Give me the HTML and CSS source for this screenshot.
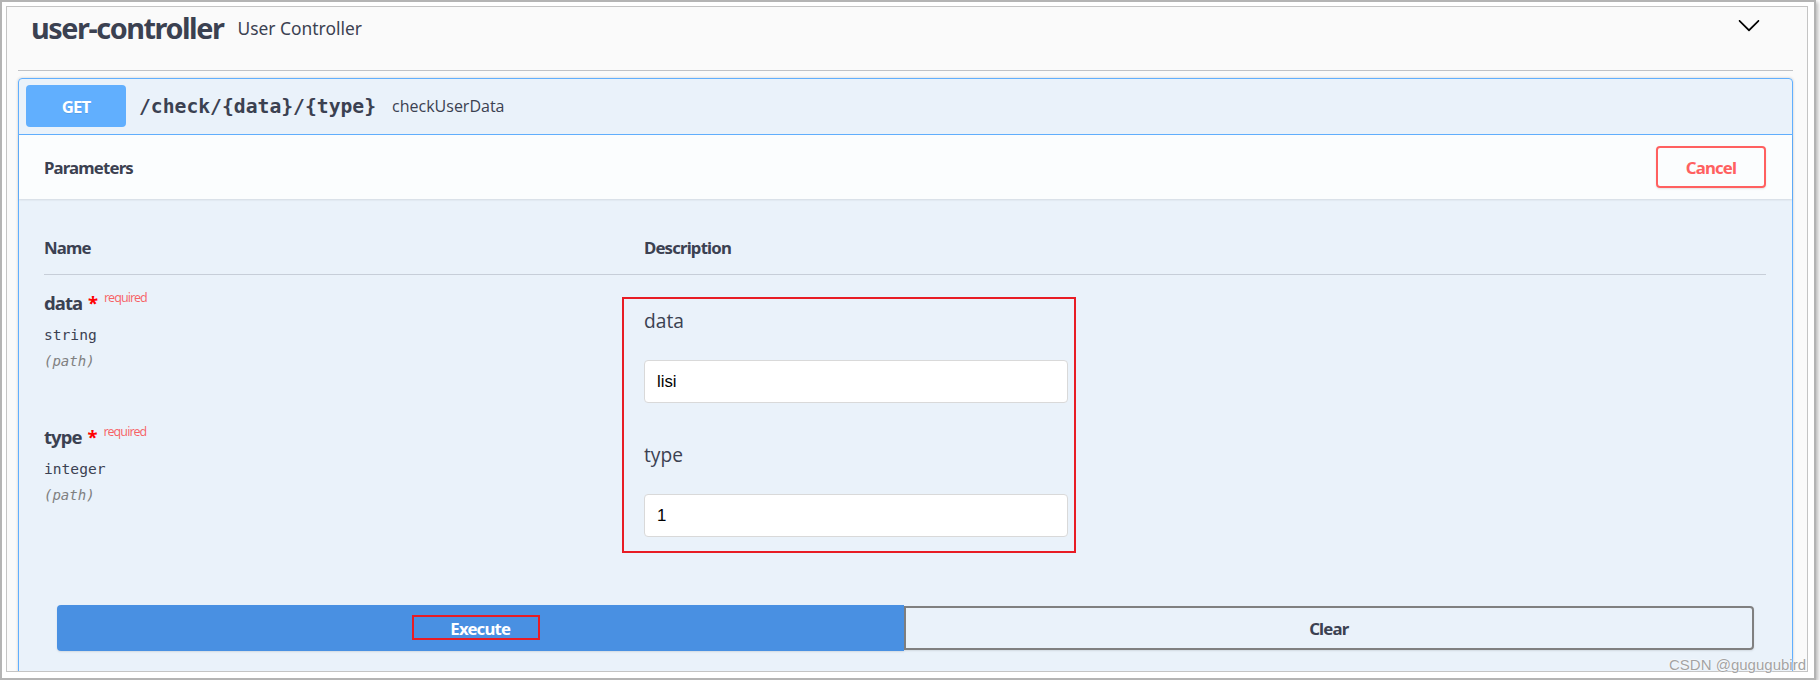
FILE: index.html
```html
<!DOCTYPE html>
<html lang="en">
<head>
<meta charset="utf-8">
<title>Swagger - user-controller</title>
<link rel="stylesheet" href="styles.css">
</head>
<body>
<div class="shot">
  <div class="frame">
    <div class="tag-section">
      <h3 class="tag">
        <span class="tag-name">user-controller</span>
        <small class="tag-desc">User Controller</small>
        <svg class="arrow" viewBox="0 0 20 20" width="24" height="24" aria-hidden="true"><path d="M17.418 6.109c.272-.268.709-.268.979 0s.271.701 0 .969l-7.908 7.83c-.27.268-.707.268-.979 0l-7.908-7.830c-.27-.268-.27-.701 0-.969.271-.268.709-.268.979 0L10 13.25l7.418-7.141z"/></svg>
      </h3>
      <div class="opblock">
        <div class="summary">
          <span class="method">GET</span>
          <span class="path">/check/{data}/{type}</span>
          <span class="summary-desc">checkUserData</span>
        </div>
        <div class="section-header">
          <h4 class="section-title">Parameters</h4>
          <button class="btn cancel">Cancel</button>
        </div>
        <div class="table">
          <div class="thead">
            <div class="th">Name</div>
            <div class="th">Description</div>
          </div>
          <div class="tbody">
            <div class="row">
              <div class="col-name">
                <div class="pname">data<span class="star">&nbsp;*</span><span class="req">required</span></div>
                <div class="ptype">string</div>
                <div class="pin">(path)</div>
              </div>
              <div class="col-desc">
                <p class="pdesc">data</p>
                <input class="pinput" type="text" value="lisi">
              </div>
            </div>
            <div class="row">
              <div class="col-name">
                <div class="pname">type<span class="star">&nbsp;*</span><span class="req">required</span></div>
                <div class="ptype">integer</div>
                <div class="pin">(path)</div>
              </div>
              <div class="col-desc">
                <p class="pdesc">type</p>
                <input class="pinput" type="text" value="1">
              </div>
            </div>
            <div class="mark mark-desc"></div>
          </div>
        </div>
        <div class="execute-wrapper">
          <button class="btn execute">Execute<span class="mark mark-exec"></span></button>
          <button class="btn clear">Clear</button>
        </div>
      </div>
    </div>
  </div>
  <div class="watermark">CSDN @gugugubird</div>
</div>
</body>
</html>
```

FILE: styles.css
```css
* { box-sizing: border-box; }

body {
  margin: 0;
  background: #ffffff;
  font-family: "Noto Sans", "Open Sans", sans-serif;
  color: #3b4151;
}

.shot {
  position: relative;
  width: 1816px;
  height: 680px;
  border: 2px solid #b4b4b4;
  padding: 4px 6px 6px 4px;
  background: #ffffff;
  box-shadow: 2px 2px 4px rgba(0, 0, 0, 0.28);
}

.frame {
  width: 100%;
  height: 100%;
  border: 1px solid #c4c4c4;
  background: #fafafa;
  overflow: hidden;
}

.tag-section {
  padding: 0 14px 0 11px;
}

/* Titillium-like headings: Noto Sans tightened */
.tag-name,
.method,
.section-title,
.th,
.pname,
.btn {
  font-family: "Noto Sans", sans-serif;
  font-weight: 700;
  letter-spacing: -0.05em;
}

/* ---------- tag header ---------- */
.tag {
  display: flex;
  align-items: flex-start;
  height: 64px;
  margin: 0;
  padding: 3px 0 0 0;
  border-bottom: 1px solid rgba(59, 65, 81, 0.3);
}

.tag-name {
  margin-left: 13px;
  font-size: 28.8px;
  line-height: 36px;
  color: #3b4151;
}

.tag-desc {
  margin: 8px 0 0 14px;
  font-family: "Noto Sans", sans-serif;
  font-weight: 400;
  font-size: 17.4px;
  line-height: 20px;
  color: #3b4151;
}

.arrow {
  display: block;
  margin: 3px 32px 0 auto;
  fill: #000000;
}

/* ---------- operation block ---------- */
.opblock {
  margin-top: 7px;
  border: 1px solid #61affe;
  border-radius: 4px;
  background: rgba(97, 175, 254, 0.1);
  box-shadow: 0 0 3px rgba(0, 0, 0, 0.19);
}

.summary {
  display: flex;
  align-items: center;
  padding: 6px 7px 7px;
  border-bottom: 1px solid #61affe;
}

.method {
  display: flex;
  align-items: center;
  justify-content: center;
  width: 100px;
  height: 42px;
  border-radius: 4px;
  background: #61affe;
  color: #ffffff;
  font-size: 16.8px;
  text-shadow: 0 1px 0 rgba(0, 0, 0, 0.1);
}

.path {
  margin-left: 13px;
  font-family: "DejaVu Sans Mono", "Liberation Mono", monospace;
  font-weight: 700;
  font-size: 19.7px;
  color: #3b4151;
}

.summary-desc {
  margin-left: 16px;
  font-family: "Open Sans", "Noto Sans", sans-serif;
  font-size: 16px;
  color: #3b4151;
}

.section-header {
  display: flex;
  align-items: center;
  justify-content: space-between;
  height: 64px;
  padding: 0 26px 0 25px;
  background: rgba(255, 255, 255, 0.8);
  box-shadow: 0 1px 2px rgba(0, 0, 0, 0.1);
}

.section-title {
  margin: 0;
  font-size: 16.8px;
  color: #3b4151;
}

.btn {
  font-size: 16.8px;
  background: transparent;
  cursor: pointer;
  padding: 0;
}

.cancel {
  width: 110px;
  height: 42px;
  border: 2px solid #ff6060;
  border-radius: 4px;
  color: #ff6060;
  box-shadow: 0 1px 2px rgba(0, 0, 0, 0.1);
}

/* ---------- parameters table ---------- */
.table {
  padding: 39px 26px 0 25px;
}

.thead {
  display: grid;
  grid-template-columns: 600px 1fr;
  padding-bottom: 16px;
  border-bottom: 1px solid rgba(59, 65, 81, 0.2);
}

.th {
  font-size: 16.8px;
  line-height: 20px;
  color: #3b4151;
}

.tbody {
  position: relative;
  display: flex;
  flex-direction: column;
  gap: 23px;
  padding-top: 17px;
}

.row {
  display: grid;
  grid-template-columns: 600px 1fr;
}

.pname {
  font-size: 18.5px;
  line-height: 22px;
  color: #3b4151;
}

.star {
  letter-spacing: 0;
  padding-left: 1px;
  color: #ff0000;
}

.req {
  padding-left: 6px;
  font-weight: 400;
  font-size: 12.5px;
  line-height: 10px;
  vertical-align: 8px;
  color: rgba(255, 0, 0, 0.6);
}

.ptype {
  margin-top: 12px;
  font-family: "DejaVu Sans Mono", "Liberation Mono", monospace;
  font-size: 14.6px;
  line-height: 18px;
  color: #3b4151;
}

.pin {
  margin-top: 8px;
  font-family: "DejaVu Sans Mono", "Liberation Mono", monospace;
  font-style: italic;
  font-size: 14px;
  line-height: 18px;
  color: #808080;
}

.col-desc {
  padding-top: 17px;
}

.pdesc {
  margin: 0 0 27px;
  font-family: "Open Sans", "Noto Sans", sans-serif;
  font-size: 19.2px;
  line-height: 24px;
  color: #3b4151;
}

.pinput {
  display: block;
  width: 424px;
  height: 43px;
  margin: 0;
  padding: 0 12px;
  border: 1px solid #d9d9d9;
  border-radius: 4px;
  background: #ffffff;
  font-family: "Liberation Sans", Arial, sans-serif;
  font-size: 16.8px;
  color: #000000;
}

/* annotation boxes drawn over the screenshot */
.mark {
  position: absolute;
  border: 2px solid #e81c24;
  pointer-events: none;
}

.mark-desc {
  left: 578px;
  top: 22px;
  width: 454px;
  height: 256px;
}

.mark-exec {
  left: 355px;
  top: 10px;
  width: 128px;
  height: 25px;
}

/* ---------- execute / clear ---------- */
.execute-wrapper {
  display: flex;
  align-items: center;
  padding: 68px 38px 40px;
}

.execute {
  position: relative;
  flex: 1;
  height: 46px;
  border: none;
  border-radius: 4px 0 0 4px;
  background: #4990e2;
  color: #ffffff;
  box-shadow: 0 1px 2px rgba(0, 0, 0, 0.1);
}

.clear {
  flex: 1;
  height: 44px;
  border: 2px solid #808080;
  border-radius: 0 4px 4px 0;
  color: #3b4151;
  box-shadow: 0 1px 2px rgba(0, 0, 0, 0.1);
}

/* ---------- watermark ---------- */
.watermark {
  position: absolute;
  right: 8px;
  top: 654px;
  font-family: "Liberation Sans", Arial, sans-serif;
  font-size: 15px;
  line-height: 17px;
  color: #a3a3a3;
  text-shadow: 0 0 2px #ffffff, 0 0 1px #ffffff;
}
```
